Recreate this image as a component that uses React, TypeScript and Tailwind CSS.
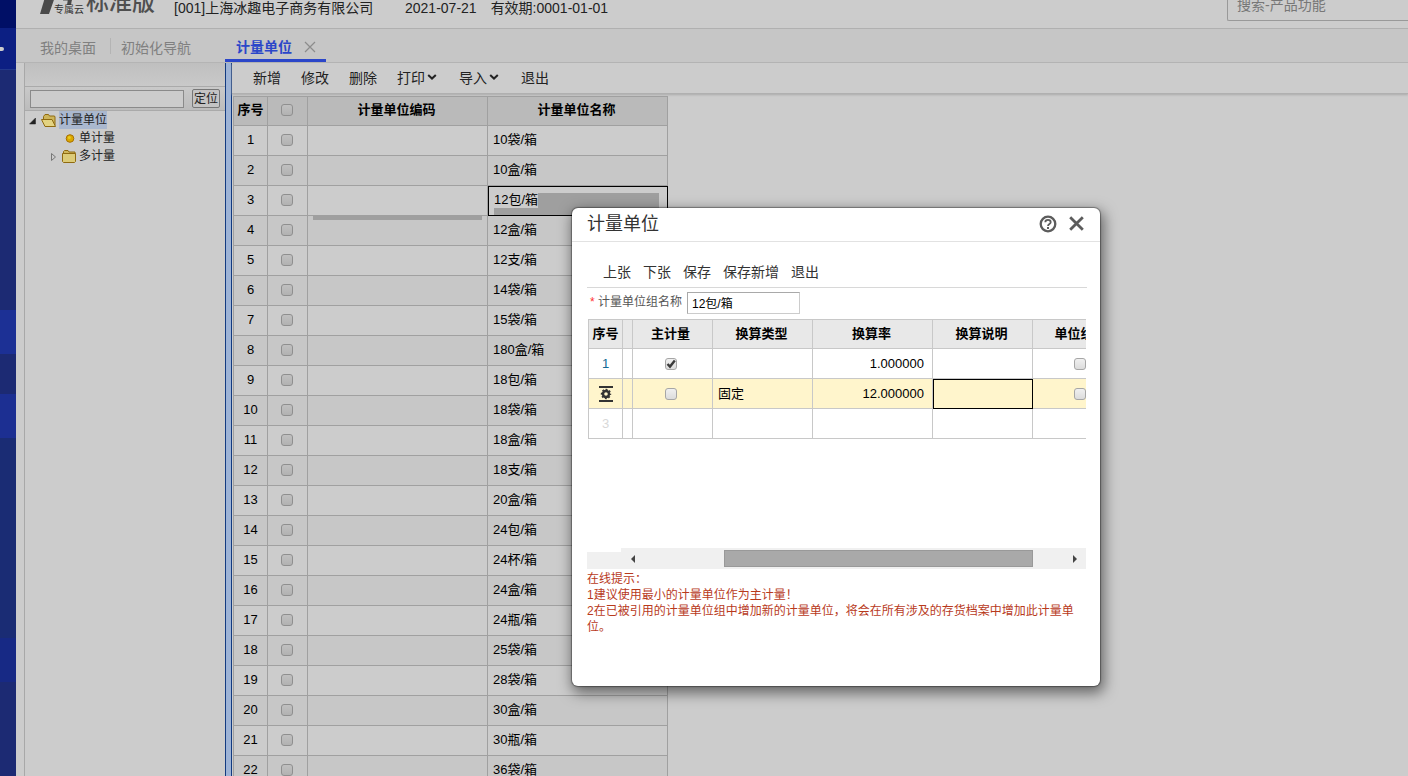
import React, { useState } from 'react';

const UNITS = [
  '10袋/箱', '10盒/箱', '12包/箱', '12盒/箱', '12支/箱', '14袋/箱', '15袋/箱', '180盒/箱',
  '18包/箱', '18袋/箱', '18盒/箱', '18支/箱', '20盒/箱', '24包/箱', '24杯/箱', '24盒/箱',
  '24瓶/箱', '25袋/箱', '28袋/箱', '30盒/箱', '30瓶/箱', '36袋/箱',
];

const Chevron: React.FC = () => (
  <svg className="w-2.5 h-2" viewBox="0 0 10 8" fill="none" stroke="#222" strokeWidth="2">
    <path d="M1.2 1 5 4.6 8.800 1" />
  </svg>
);

const Sidebar: React.FC = () => (
  <aside className="w-4 shrink-0 flex flex-col bg-[#1c2a73]">
    <div className="h-7 bg-[#000f66]" />
    <div className="h-[42px] flex items-center bg-[#0c1f83] border-b border-[#22388c]">
      <div className="w-1 h-1 rounded-r-full bg-[#ccc]" />
    </div>
    <div className="h-60" />
    <div className="h-11 bg-[#1c3095]" />
    <div className="h-10" />
    <div className="h-11 bg-[#1c2f92]" />
    <div className="h-[200px] bg-[#1a2c74]" />
    <div className="h-11 bg-[#172985]" />
  </aside>
);

const Header: React.FC = () => (
  <header className="h-[61px] -mt-8 shrink-0 flex items-end border-b border-[#b0b0b0] pl-6 overflow-hidden text-sm text-[#222]">
    <div className="flex items-end mb-3 w-[134px]">
      <svg className="w-8 h-7 -mr-4" viewBox="0 0 32 28" fill="#4a4a4a">
        <path d="M6 6h10L9 26H0z" />
        <path d="M28.500 8h4l-1.500 9h-4z M23 9h9v3.500h-9z" />
      </svg>
      <span className="text-[10px] leading-[12px] -ml-0.5 text-[#333]">专属云</span>
      <span className="text-[23px] leading-[28px] ml-0.5 font-medium text-[#4f4f4f]">标准版</span>
    </div>
    <span className="leading-4 mb-3 w-[231px]">[001]上海冰趣电子商务有限公司</span>
    <span className="leading-4 mb-3 mr-3.5">2021-07-21</span>
    <span className="leading-4 mb-3">有效期:0001-01-01</span>
    <input
      aria-label="搜索"
      placeholder="搜索-产品功能"
      className="ml-auto h-8 w-[181px] mb-[7px] px-[9px] border border-r-0 border-[#999] rounded-l-xs text-sm placeholder:text-[#777]"
    />
  </header>
);

const TabBar: React.FC = () => (
  <nav className="h-[34px] shrink-0 flex items-stretch bg-[#c6c6c6] border-b border-[#b4b4b4] text-sm text-[#808080]">
    <a href="#desktop" className="flex items-center pl-6 pr-3.5 pt-1">我的桌面</a>
    <span className="w-px h-4 self-center bg-[#b4b4b4]" />
    <a href="#guide" className="flex items-center pl-2.5 w-[114px] pt-1">初始化导航</a>
    <div className="-mb-px h-[33px] w-[101px] flex items-center gap-3 pl-[11px] border-b-3 border-[#2b46c9] text-[#2b46c9]">
      <a href="#units" className="font-bold pt-1.5">计量单位</a>
      <button aria-label="关闭" className="pt-1.5">
        <svg className="w-3 h-3" viewBox="0 0 12 12" stroke="#8c8c8c" strokeWidth="1.2">
          <path d="M1 1 11 11M11 1 1 11" />
        </svg>
      </button>
    </div>
  </nav>
);

const Folder: React.FC<{ open?: boolean }> = ({ open }) => (
  <svg className="w-4 h-4" viewBox="0 0 16 16" stroke="#8f6a10" strokeWidth="1" strokeLinejoin="round">
    {open ? (
      <>
        <path d="M2.500 8V4.500L4 2.500h3.500l1 1.500h5l.5 1v8.500" fill="#cdb55a" />
        <path d="M4 14.500.500 7.500h10.500l3.500 7z" fill="#e3d382" />
      </>
    ) : (
      <>
        <path d="M2.500 6V3.500l1-1h3.500l1 1.500h6V6z" fill="#cdb55a" />
        <path d="M1.500 5.500h13v8l-1 1h-11l-1-1z" fill="#dccb78" />
      </>
    )}
  </svg>
);

const TreePanel: React.FC = () => (
  <div className="w-[201px] shrink-0 ml-2 border-l border-[#a8a8a8] text-xs text-[#222]">
    <div className="h-6 border-b border-[#aaa] bg-linear-to-b from-[#bfbfbf] to-[#c9c9c9]" />
    <form className="h-6 flex items-center justify-between pl-[5px] pr-[5px] border-b border-[#aaa] bg-linear-to-b from-[#c9c9c9] to-[#bcbcbc]">
      <input aria-label="查找" className="w-[154px] h-[18px] border border-[#8a8a8a] bg-[#ccc]" />
      <button type="button" className="w-7 h-[19px] border border-[#777] rounded-xs bg-[#c4c4c4] leading-4">定位</button>
    </form>
    <ul className="leading-[18px]">
      <li>
        <div className="flex items-center h-[18px] pl-1">
          <svg className="w-3 h-3" viewBox="0 0 12 12"><path d="M6.500 4v6H.500z" fill="#222" stroke="#222" strokeWidth=".5" /></svg>
          <Folder open />
          <span className="ml-0.5 bg-[#aab8cf]">计量单位</span>
        </div>
        <ul>
          <li className="flex items-center h-[18px] pl-10">
            <svg className="w-2.5 h-2.5" viewBox="0 0 10 10">
              <circle cx="5" cy="5.500" r="3.800" fill="#dba800" stroke="#a87000" />
              <circle cx="4.300" cy="4.600" r="1.500" fill="#e8cc20" />
            </svg>
            <span className="ml-1">单计量</span>
          </li>
          <li className="flex items-center h-[18px] pl-6">
            <svg className="w-3 h-3" viewBox="0 0 12 12"><path d="M2.500 3.500v7l4-3.500z" fill="none" stroke="#777" /></svg>
            <Folder />
            <span className="ml-0.5">多计量</span>
          </li>
        </ul>
      </li>
    </ul>
  </div>
);

const check =
  "block mx-auto appearance-none w-3 h-3 rounded-[3px] border border-[#8f8f8f] bg-linear-to-b from-[#c0c0c0] to-[#b2b2b2]";
const dialogCheck =
  "block mx-auto appearance-none w-3 h-3 rounded-[3px] border border-[#a6a6a6] bg-linear-to-b from-[#f0f0f0] to-[#dcdcdc]";

const UnitTable: React.FC = () => (
  <table className="table-fixed w-[435px] ml-px mt-0.5 border-separate border-spacing-0 border-l border-t border-[#a0a0a0] text-[13px] leading-5 text-black [&_td]:border-r [&_td]:border-b [&_td]:border-[#a0a0a0] [&_td]:pb-0.5 [&_th]:border-r [&_th]:border-b [&_th]:border-[#a0a0a0] [&_th]:pb-0.5">
    <thead>
      <tr className="h-[29px] bg-[#bababa]">
        <th className="w-[34px]">序号</th>
        <th className="w-10 pr-0.5"><input type="checkbox" aria-label="全选" className={check} /></th>
        <th className="w-[180px] pr-0.5">计量单位编码</th>
        <th className="pr-0.5">计量单位名称</th>
      </tr>
    </thead>
    <tbody>
      {UNITS.map((name, i) => (
        <tr key={name} className="h-[30px] odd:bg-[#ccc] even:bg-[#c7c7c7]">
          <td className="text-center">{i + 1}</td>
          <td className="pr-0.5"><input type="checkbox" aria-label={name} className={check} /></td>
          <td className="relative">
            {/* edge of the hidden cell editor */}
            {i === 2 && <div className="absolute z-10 left-[5px] -bottom-[5px] w-[169px] h-[5px] bg-[#9f9f9f]" />}
          </td>
          {i === 2 ? (
            <td className="relative outline outline-black -outline-offset-1 pl-1.5">
              <div className="absolute left-[50px] right-2 top-[7px] h-[15px] bg-[#9f9f9f]" />
              <div className="absolute left-1.5 right-2 bottom-0 h-[7px] bg-[#9f9f9f]" />
              <span className="relative">{name}</span>
            </td>
          ) : (
            <td className="pl-[5px]">{name}</td>
          )}
        </tr>
      ))}
    </tbody>
  </table>
);

const MainPanel: React.FC = () => (
  <main className="flex-1 min-w-0">
    <div className="h-[31px] flex items-center gap-5 pl-[21px] border-b border-[#b0b0b0] shadow-[0_1px_2px_#aaa] text-sm text-[#222]">
      <button>新增</button>
      <button>修改</button>
      <button>删除</button>
      <button className="flex items-center gap-0.5 pr-0.5">打印<Chevron /></button>
      <button className="flex items-center gap-0.5 pr-0.5">导入<Chevron /></button>
      <button>退出</button>
    </div>
    <UnitTable />
  </main>
);

const Dialog: React.FC = () => {
  const [groupName, setGroupName] = useState<string>('12包/箱');

  return (
    <section
      role="dialog"
      aria-label="计量单位"
      className="absolute z-20 left-[572px] top-52 w-[528px] h-[478px] bg-white rounded-md shadow-[2px_5px_14px_2px_rgba(0,0,0,0.5),0_0_1px_1px_rgba(0,0,0,0.35)]"
    >
      <div className="h-[34px] flex items-center pl-[15px] pr-4 pb-0.5 border-b border-[#e2e2e2]">
        <h2 className="text-lg leading-6 text-[#333]">计量单位</h2>
        <button aria-label="帮助" className="ml-auto mr-3">
          <svg className="w-[18px] h-[18px]" viewBox="0 0 18 18" fill="none" stroke="#5c5c5c">
            <circle cx="9" cy="9" r="7.300" strokeWidth="2.300" />
            <path d="M6.300 7.300C6.300 5.500 7.500 4.900 9 4.900s2.700.9 2.700 2.400C11.700 9 9 9 9 11" strokeWidth="1.800" />
            <path d="M9 12v2" strokeWidth="2" />
          </svg>
        </button>
        <button aria-label="关闭">
          <svg className="w-[15px] h-[15px]" viewBox="0 0 15 15" stroke="#5c5c5c" strokeWidth="2.800">
            <path d="M1.200 1.200 13.800 13.800M13.800 1.200 1.200 13.800" />
          </svg>
        </button>
      </div>

      <div className="pl-[15px] pr-[13px]">
        <div className="flex gap-3 pl-4 pt-5 pb-[5px] border-b border-[#d8d8d8] text-sm leading-5 text-[#333]">
          <button>上张</button>
          <button>下张</button>
          <button>保存</button>
          <button>保存新增</button>
          <button>退出</button>
        </div>

        <div className="flex items-center pl-[3px] pt-1 pb-[5px] text-xs">
          <label htmlFor="group-name" className="text-[#555] flex items-center pb-0.5">
            <span className="text-[#f33] w-2">*</span>计量单位组名称
          </label>
          <input
            id="group-name"
            value={groupName}
            onChange={(e) => setGroupName(e.target.value)}
            className="ml-[5px] w-[113px] h-[22px] px-1 pb-0.5 border border-[#a9a9a9] border-r-[#ccc] border-b-[#ccc] text-black"
          />
        </div>

        {/* Detail grid */}
        <div className="ml-px mr-px h-[229px] overflow-hidden">
          <table className="table-fixed w-[543px] border-separate border-spacing-0 border-l border-t border-[#c8c8c8] text-[13px] leading-5 text-black [&_td]:border-r [&_td]:border-b [&_td]:border-[#c8c8c8] [&_th]:border-r [&_th]:border-b [&_th]:border-[#c8c8c8]">
            <thead>
              <tr className="h-[29px] bg-[#e8e8e8]">
                <th className="w-[34px]">序号</th>
                <th className="w-2.5" />
                <th className="w-20 pr-1">主计量</th>
                <th className="w-[100px] pr-0.5">换算类型</th>
                <th className="w-[120px] pr-0.5">换算率</th>
                <th className="w-[100px] pr-0.5">换算说明</th>
                <th className="pr-0.5">单位组合</th>
              </tr>
            </thead>
            <tbody>
              <tr className="h-[30px]">
                <td className="text-center text-[#146a94]">1</td>
                <td />
                <td className="pr-1">
                  <span className="relative block w-3 mx-auto">
                    <input type="checkbox" aria-label="主计量" defaultChecked className={dialogCheck} />
                    <svg className="absolute left-0 top-0 w-3 h-3 pointer-events-none" viewBox="0 0 12 12" fill="none" stroke="#3a3a3a" strokeWidth="2.400">
                      <path d="M2.500 6 5 8.600 9.800 2.600" />
                    </svg>
                  </span>
                </td>
                <td />
                <td className="text-right pr-2">1.000000</td>
                <td />
                <td className="pr-1"><input type="checkbox" aria-label="单位组合" className={dialogCheck} /></td>
              </tr>
              <tr className="h-[30px] bg-[#fff5cc]">
                <td>
                  <svg className="block mx-auto w-4 h-4" viewBox="0 0 16 16" fill="none" stroke="#333">
                    <path d="M1 1h14M1 15h14" strokeWidth="2" />
                    <circle cx="8" cy="8" r="3" strokeWidth="2.400" />
                    <circle cx="8" cy="8" r="4.500" strokeWidth="1.400" strokeDasharray="1.900 1.634" strokeDashoffset=".95" />
                  </svg>
                </td>
                <td />
                <td className="pr-1"><input type="checkbox" aria-label="主计量" className={dialogCheck} /></td>
                <td className="pl-[5px]">固定</td>
                <td className="text-right pr-2">12.000000</td>
                <td className="outline outline-black -outline-offset-1" />
                <td className="pr-1"><input type="checkbox" aria-label="单位组合" className={dialogCheck} /></td>
              </tr>
              <tr className="h-[30px]">
                <td className="text-center text-[#d8d8d8]">3</td>
                <td />
                <td />
                <td />
                <td />
                <td />
                <td />
              </tr>
            </tbody>
          </table>
        </div>

        {/* Horizontal scrollbar */}
        <div className="flex items-end mr-px">
          <div className="w-[34px] h-[17px] bg-[#f0f0f0]" />
          <div className="flex-1 h-[21px] flex items-center bg-[#f0f0f0] pl-[9px] pr-2">
            <svg className="w-1.5 h-2" viewBox="0 0 6 8"><path d="M5 0v8L1 4z" fill="#444" /></svg>
            <div className="ml-[88px] w-[309px] h-[17px] bg-[#a9a9a9] border border-[#999]" />
            <svg className="ml-auto w-1.5 h-2" viewBox="0 0 6 8"><path d="M1 0v8l4-4z" fill="#444" /></svg>
          </div>
        </div>

        <div className="pt-0.5 text-xs leading-4 text-[#b83a1c]">
          <p>在线提示：</p>
          <p>1建议使用最小的计量单位作为主计量！</p>
          <p>2在已被引用的计量单位组中增加新的计量单位，将会在所有涉及的存货档案中增加此计量单位。</p>
        </div>
      </div>
    </section>
  );
};

export default function App() {
  return (
    <div className="relative h-screen overflow-hidden flex bg-[#ccc] font-['Liberation_Sans','Noto_Sans_CJK_SC',sans-serif]">
      <Sidebar />
      <div className="flex-1 min-w-0 flex flex-col">
        <Header />
        <TabBar />
        <div className="flex-1 min-h-0 flex">
          <TreePanel />
          <div className="w-[7px] shrink-0 bg-[#9db3d6] border-x border-[#123a80]" />
          <MainPanel />
        </div>
      </div>
      <Dialog />
    </div>
  );
}
